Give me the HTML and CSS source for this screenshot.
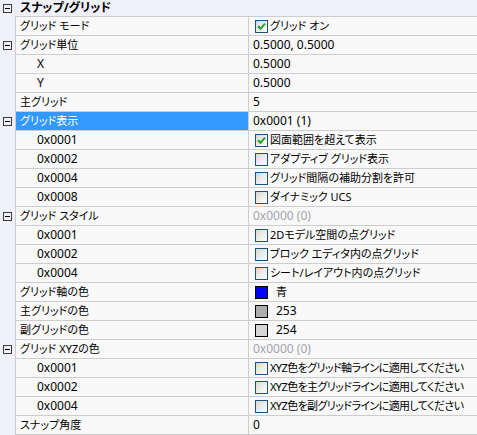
FILE: index.html
```html
<!DOCTYPE html>
<html lang="ja">
<head>
<meta charset="utf-8">
<title>スナップ/グリッド</title>
<link rel="stylesheet" href="styles.css">
</head>
<body>
<div class="pg">
  <div class="hdr">
    <div class="g"><svg class="tg" width="9" height="9" viewBox="0 0 9 9"><rect x="0.5" y="0.5" width="8" height="8" fill="none" stroke="#3c3c3c"/><path d="M2 4.5h5" stroke="#000"/></svg></div>
    <div class="ht">スナップ/グリッド</div>
  </div>

  <div class="row"><div class="g"></div><div class="nm">グリッド モード</div><div class="vl"><span class="cb"><svg width="11" height="11" viewBox="0 0 11 11"><path d="M2 5.2L4.4 7.8L9 2.6" fill="none" stroke="#21a121" stroke-width="2"/></svg></span>グリッド オン</div></div>
  <div class="row"><div class="g"><svg class="tg" width="9" height="9" viewBox="0 0 9 9"><rect x="0.5" y="0.5" width="8" height="8" fill="none" stroke="#3c3c3c"/><path d="M2 4.5h5" stroke="#000"/></svg></div><div class="nm">グリッド単位</div><div class="vl n">0.5000, 0.5000</div></div>
  <div class="row"><div class="g"></div><div class="nm c n">X</div><div class="vl n">0.5000</div></div>
  <div class="row"><div class="g"></div><div class="nm c n">Y</div><div class="vl n">0.5000</div></div>
  <div class="row"><div class="g"></div><div class="nm">主グリッド</div><div class="vl n">5</div></div>
  <div class="row"><div class="g"><svg class="tg" width="9" height="9" viewBox="0 0 9 9"><rect x="0.5" y="0.5" width="8" height="8" fill="none" stroke="#3c3c3c"/><path d="M2 4.5h5" stroke="#000"/></svg></div><div class="nm sel">グリッド表示</div><div class="vl n">0x0001 (1)</div></div>
  <div class="row"><div class="g"></div><div class="nm c n">0x0001</div><div class="vl"><span class="cb"><svg width="11" height="11" viewBox="0 0 11 11"><path d="M2 5.2L4.4 7.8L9 2.6" fill="none" stroke="#21a121" stroke-width="2"/></svg></span>図面範囲を超えて表示</div></div>
  <div class="row"><div class="g"></div><div class="nm c n">0x0002</div><div class="vl"><span class="cb"></span>アダプティブ グリッド表示</div></div>
  <div class="row"><div class="g"></div><div class="nm c n">0x0004</div><div class="vl"><span class="cb"></span>グリッド間隔の補助分割を許可</div></div>
  <div class="row"><div class="g"></div><div class="nm c n">0x0008</div><div class="vl"><span class="cb"></span>ダイナミック UCS</div></div>
  <div class="row"><div class="g"><svg class="tg" width="9" height="9" viewBox="0 0 9 9"><rect x="0.5" y="0.5" width="8" height="8" fill="none" stroke="#3c3c3c"/><path d="M2 4.5h5" stroke="#000"/></svg></div><div class="nm">グリッド スタイル</div><div class="vl n dis">0x0000 (0)</div></div>
  <div class="row"><div class="g"></div><div class="nm c n">0x0001</div><div class="vl"><span class="cb"></span>2Dモデル空間の点グリッド</div></div>
  <div class="row"><div class="g"></div><div class="nm c n">0x0002</div><div class="vl"><span class="cb"></span>ブロック エディタ内の点グリッド</div></div>
  <div class="row"><div class="g"></div><div class="nm c n">0x0004</div><div class="vl"><span class="cb"></span>シート/レイアウト内の点グリッド</div></div>
  <div class="row"><div class="g"></div><div class="nm">グリッド軸の色</div><div class="vl"><span class="sw blue"></span>青</div></div>
  <div class="row"><div class="g"></div><div class="nm">主グリッドの色</div><div class="vl"><span class="sw g253"></span><span class="n">253</span></div></div>
  <div class="row"><div class="g"></div><div class="nm">副グリッドの色</div><div class="vl"><span class="sw g254"></span><span class="n">254</span></div></div>
  <div class="row"><div class="g"><svg class="tg" width="9" height="9" viewBox="0 0 9 9"><rect x="0.5" y="0.5" width="8" height="8" fill="none" stroke="#3c3c3c"/><path d="M2 4.5h5" stroke="#000"/></svg></div><div class="nm">グリッド XYZの色</div><div class="vl n dis">0x0000 (0)</div></div>
  <div class="row"><div class="g"></div><div class="nm c n">0x0001</div><div class="vl tight"><span class="cb"></span>XYZ色をグリッド軸ラインに適用してください</div></div>
  <div class="row"><div class="g"></div><div class="nm c n">0x0002</div><div class="vl tight"><span class="cb"></span>XYZ色を主グリッドラインに適用してください</div></div>
  <div class="row"><div class="g"></div><div class="nm c n">0x0004</div><div class="vl tight"><span class="cb"></span>XYZ色を副グリッドラインに適用してください</div></div>
  <div class="row last"><div class="g"></div><div class="nm">スナップ角度</div><div class="vl n">0</div></div>
</div>
</body>
</html>
```

FILE: styles.css
```css
* { box-sizing: border-box; }
html, body { margin: 0; padding: 0; background: #f0f0fa; }

.pg {
  width: 477px;
  height: 435px;
  overflow: hidden;
  background: #f0f0fa;
  font-family: "Noto Sans", "Noto Sans CJK JP", sans-serif;
  font-size: 11px;
  color: #000;
  font-feature-settings: "palt";
}

.hdr {
  height: 16px;
  display: flex;
  align-items: center;
}
.hdr .g { width: 15px; padding-top: 0; }
.ht {
  padding-left: 5px;
  font-size: 12px;
  font-weight: bold;
  line-height: 16px;
}

.row {
  display: grid;
  grid-template-columns: 15px 233px 229px;
  height: 19px;
}
.row.last { height: 20px; }

.g {
  display: flex;
  align-items: center;
  padding-left: 3px;
  padding-top: 1px;
}
.tg { display: block; }

.nm, .vl {
  display: flex;
  align-items: center;
  white-space: nowrap;
  overflow: hidden;
  background: #f9f9f9;
  border-top: 1px solid #cdcdcd;
  border-left: 1px solid #cdcdcd;
  line-height: 18px;
}
.row.last .nm, .row.last .vl { border-bottom: 1px solid #cdcdcd; }

.nm { padding-left: 4px; }
.nm.c { padding-left: 21px; }
.vl { padding-left: 4px; }
.vl.tight { letter-spacing: -0.6px; }

.n { font-size: 12px; }
.sel { background: #3399ff; color: #fff; }
.dis { color: #a3a3ad; }

.cb {
  flex: none;
  width: 13px;
  height: 13px;
  margin: 0 2px 0 2px;
  border: 1px solid #1c5180;
  background: linear-gradient(135deg, #d8d8d2 0%, #f4f4f2 70%, #ffffff 100%);
  display: flex;
  letter-spacing: 0;
}
.cb svg { display: block; }

.sw {
  flex: none;
  width: 13px;
  height: 13px;
  margin: 0 8px 0 2px;
  border: 1px solid #000;
}
.blue { background: #0000ff; }
.g253 { background: #adadad; }
.g254 { background: #d6d6d6; }
```
